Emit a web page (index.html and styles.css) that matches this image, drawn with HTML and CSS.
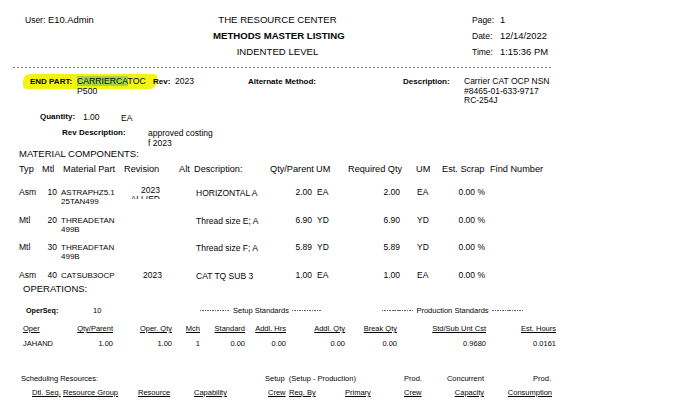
FILE: index.html
```html
<!DOCTYPE html>
<html lang="en">
    <head>
        <meta charset="UTF-8">
        <title>Methods Master Listing</title>
        <link rel="stylesheet" href="styles.css">
    </head>

    <body>
        <main class="report">
            <div class="top">
                <div class="user"><span class="small">User:</span> <span class="val">E10.Admin</span></div>
                <div class="title">
                    <div>THE RESOURCE CENTER</div>
                    <div class="bold">METHODS MASTER LISTING</div>
                    <div>INDENTED LEVEL</div>
                </div>
                <div></div>
                <div class="meta">
                    <span class="small">Page:</span><span>1</span>
                    <span class="small">Date:</span><span>12/14/2022</span>
                    <span class="small">Time:</span><span>1:15:36 PM</span>
                </div>
            </div>

            <div class="rule"></div>

            <!-- end part block -->
            <div class="part">
                <div class="marker"></div>
                <span class="lbl">END PART:</span>
                <span class="part-val"><span class="sel">CARRIERCA</span>TOC<br>P500</span>
                <span class="lbl">Rev:</span>
                <span>2023</span>
                <span class="lbl">Alternate Method:</span>
                <span class="lbl">Description:</span>
                <span>Carrier CAT OCP NSN<br>#8465-01-633-9717<br>RC-254J</span>
            </div>

            <div class="qty">
                <span class="lbl">Quantity:</span>
                <span>1.00</span>
                <span class="ea">EA</span>
            </div>

            <div class="revdesc">
                <span class="lbl">Rev Description:</span>
                <span class="revtext">approved costing<br>f 2023</span>
            </div>

            <div class="section-title">MATERIAL COMPONENTS:</div>

            <div class="mat mat-head">
                <span>Typ</span>
                <span>Mtl</span>
                <span class="mp">Material Part</span>
                <span>Revision</span>
                <span>Alt</span>
                <span class="nopad">Description:</span>
                <span>Qty/Parent</span>
                <span>UM</span>
                <span>Required Qty</span>
                <span>UM</span>
                <span>Est. Scrap</span>
                <span>Find Number</span>
            </div>

            <div class="mat-rows">
                <div class="mat mat-row">
                    <span>Asm</span><span class="num">10</span>
                    <span class="pn">ASTRAPHZ5.1<br>25TAN499</span>
                    <span class="rev clip">2023<br>ALLIED</span><span></span>
                    <span class="desc">HORIZONTAL A</span>
                    <span class="q">2.00</span><span class="um">EA</span>
                    <span class="rq">2.00</span><span class="um">EA</span>
                    <span class="sc">0.00 %</span><span></span>
                </div>
                <div class="mat mat-row">
                    <span>Mtl</span><span class="num">20</span>
                    <span class="pn">THREADETAN<br>499B</span>
                    <span class="rev"></span><span></span>
                    <span class="desc">Thread size E; A</span>
                    <span class="q">6.90</span><span class="um">YD</span>
                    <span class="rq">6.90</span><span class="um">YD</span>
                    <span class="sc">0.00 %</span><span></span>
                </div>
                <div class="mat mat-row">
                    <span>Mtl</span><span class="num">30</span>
                    <span class="pn">THREADFTAN<br>499B</span>
                    <span class="rev"></span><span></span>
                    <span class="desc">Thread size F; A</span>
                    <span class="q">5.89</span><span class="um">YD</span>
                    <span class="rq">5.89</span><span class="um">YD</span>
                    <span class="sc">0.00 %</span><span></span>
                </div>
                <div class="mat mat-row">
                    <span>Asm</span><span class="num">40</span>
                    <span class="pn">CATSUB3OCP</span>
                    <span class="rev rev-last">2023</span><span></span>
                    <span class="desc">CAT TQ SUB 3</span>
                    <span class="q">1.00</span><span class="um">EA</span>
                    <span class="rq">1.00</span><span class="um">EA</span>
                    <span class="sc">0.00 %</span><span></span>
                </div>
            </div>

            <div class="section-title ops-title">OPERATIONS:</div>

            <div class="operseq">
                <span class="seq-lbl">OperSeq:</span>
                <span>10</span>
                <span></span>
                <span class="std"><i></i>Setup Standards<i></i></span>
                <span></span>
                <span class="std"><i></i>Production Standards<i></i></span>
            </div>

            <div class="ops ops-head">
                <span>Oper</span>
                <span>Qty/Parent</span>
                <span>Oper. Qty</span>
                <span>Mch</span>
                <span>Standard</span>
                <span>Addl. Hrs</span>
                <span>Addl. Qty</span>
                <span>Break Qty</span>
                <span>Std/Sub Unt Cst</span>
                <span>Est. Hours</span>
            </div>

            <div class="ops ops-data">
                <span>JAHAND</span>
                <span>1.00</span>
                <span>1.00</span>
                <span>1</span>
                <span>0.00</span>
                <span>0.00</span>
                <span>0.00</span>
                <span>0.00</span>
                <span>0.9680</span>
                <span>0.0161</span>
            </div>

            <div class="sched1">
                <span>Scheduling Resources:</span>
                <span>Setup  (Setup - Production)</span>
                <span>Prod.</span>
                <span class="r">Concurrent</span>
                <span class="r">Prod.</span>
            </div>

            <div class="sched2">
                <span>Dtl. Seq.</span>
                <span>Resource Group</span>
                <span>Resource</span>
                <span>Capability</span>
                <span>Crew</span>
                <span>Req. By</span>
                <span>Primary</span>
                <span>Crew</span>
                <span class="r">Capacity</span>
                <span class="r">Consumption</span>
            </div>
        </main>
    </body>
</html>
```

FILE: styles.css
```css
html, body
{
    margin: 0;
    background-color: #ffffff;
}

body
{
    width: 690px;
    height: 402px;
    overflow: hidden;
    font-family: "Liberation Sans", Arial, sans-serif;
    color: #050505;
}

/* report header */
.top
{
    display: grid;
    grid-template-columns: 188px 129px 130px 100px;
    padding: 12px 0 0 25px;
    line-height: 16px;
    font-size: 9.4px;
}

.small
{
    font-size: 8.5px;
}

.title
{
    text-align: center;
    font-size: 9.6px;
    white-space: nowrap;
}

.title .bold
{
    font-weight: bold;
}

.meta
{
    display: grid;
    grid-template-columns: 28px auto;
    white-space: nowrap;
}

.rule
{
    margin: 7px 0 0 13px;
    width: 539px;
    height: 1px;
    background: repeating-linear-gradient(90deg, #7a7a7a 0 2px, transparent 2px 4px);
}

/* end part block */
.part
{
    position: relative;
    z-index: 0;
    display: grid;
    grid-template-columns: 47px 76px 22px 73px 155px 61px 110px;
    margin-top: 9px;
    padding-left: 30px;
    font-size: 8.5px;
    line-height: 9.5px;
    white-space: nowrap;
}

.lbl
{
    font-weight: bold;
    font-size: 8px;
}

.part-val
{
    font-size: 8.7px;
}

.marker
{
    position: absolute;
    left: 23px;
    top: -3px;
    width: 134px;
    height: 15px;
    background-color: #f2f214;
    border-radius: 7px 3px 8px 4px;
    z-index: -1;
}

.sel
{
    background-color: #a8d43e;
}

.qty
{
    display: grid;
    grid-template-columns: 43px 38px auto;
    margin-top: 6.5px;
    padding-left: 40px;
    font-size: 8.5px;
    line-height: 10px;
}

.ea
{
    padding-top: 1px;
}

.revdesc
{
    display: grid;
    grid-template-columns: 86px auto;
    margin-top: 5px;
    padding-left: 62px;
    font-size: 8.5px;
    line-height: 9.5px;
}

.revtext
{
    padding-top: 1px;
}

.section-title
{
    margin-top: 0;
    padding-left: 19px;
    font-size: 9.5px;
    line-height: 12px;
}

/* material components */
.mat
{
    display: grid;
    grid-template-columns: 21px 18px 64px 55px 17px 74px 46px 32px 68px 26px 48px 80px;
    padding-left: 19px;
    white-space: nowrap;
}

.mat-head
{
    margin-top: 3px;
    font-size: 9.2px;
    line-height: 12px;
}

.mat-head span
{
    padding-left: 2px;
}

.mat-head span:first-child, .mat-head .nopad
{
    padding-left: 0;
}

.mat-head .mp
{
    padding-left: 5px;
}

.mat-rows
{
    display: grid;
    row-gap: 9.5px;
    margin-top: 13px;
}

.mat-row
{
    font-size: 8.5px;
    line-height: 9px;
    align-items: start;
}

.num
{
    text-align: right;
    padding-right: 1px;
}

.pn
{
    padding-left: 3px;
    font-size: 8px;
}

.rev
{
    text-align: right;
    padding-right: 17px;
    margin-top: -2px;
}

.rev-last
{
    margin-top: 0;
    padding-right: 15px;
}

.clip
{
    height: 12.5px;
    overflow: hidden;
}

.desc
{
    padding: 1px 0 0 2px;
}

.q
{
    text-align: right;
    padding-right: 2px;
}

.um
{
    padding-left: 3px;
}

.rq
{
    text-align: right;
    padding-right: 14px;
}

.sc
{
    text-align: right;
    padding-right: 3px;
}

/* operations */
.ops-title
{
    margin-top: 2.5px;
    padding-left: 23px;
}

.operseq
{
    display: grid;
    grid-template-columns: 70px 107px 0 122px 60px 141px;
    margin-top: 10.5px;
    padding-left: 23px;
    font-size: 7.5px;
    line-height: 10px;
    white-space: nowrap;
}

.seq-lbl
{
    padding-left: 3px;
    font-weight: bold;
    font-size: 7.2px;
}

.std
{
    display: flex;
    align-items: center;
    gap: 3px;
}

.std i
{
    flex: 1;
    height: 1px;
    background: repeating-linear-gradient(90deg, #666 0 1.5px, transparent 1.5px 2.5px);
}

.ops
{
    display: grid;
    grid-template-columns: 50px 40px 59px 28px 45px 41px 59px 52px 89px 70px;
    padding-left: 23px;
    font-size: 7.5px;
    line-height: 10px;
    white-space: nowrap;
}

.ops span
{
    text-align: right;
}

.ops span:first-child
{
    text-align: left;
}

.ops-head
{
    margin-top: 8.5px;
    text-decoration: underline;
}

.ops-data
{
    margin-top: 5px;
}

/* scheduling resources */
.sched1
{
    display: grid;
    grid-template-columns: 244px 139px 29px 51px 67px;
    margin-top: 25px;
    padding-left: 21px;
    font-size: 7.5px;
    line-height: 10px;
    white-space: pre;
}

.sched2
{
    display: grid;
    grid-template-columns: 31px 75px 56px 74px 21px 56px 59px 30px 50px 68px;
    margin-top: 4px;
    padding-left: 32px;
    font-size: 7.5px;
    line-height: 10px;
    white-space: nowrap;
    text-decoration: underline;
}

.r
{
    text-align: right;
}
```
